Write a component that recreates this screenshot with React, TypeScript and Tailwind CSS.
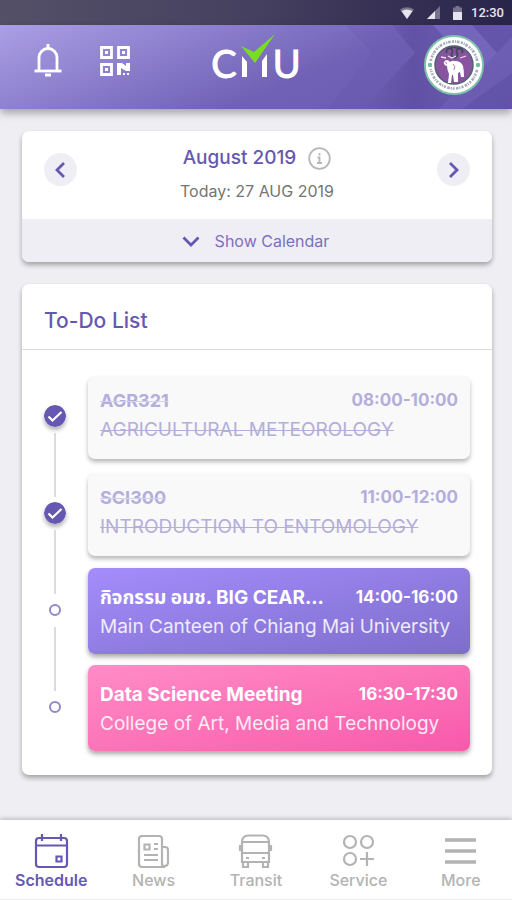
import type { ReactNode } from "react";

const SANS = "font-['Inter','Noto_Sans_Thai','Noto_Sans',sans-serif]";

type Task = {
  title: string;
  place: string;
  time: string;
  state: "done" | "violet" | "pink";
};

const tasks: Task[] = [
  { title: "AGR321", place: "AGRICULTURAL METEOROLOGY", time: "08:00-10:00", state: "done" },
  { title: "SCI300", place: "INTRODUCTION TO ENTOMOLOGY", time: "11:00-12:00", state: "done" },
  { title: "กิจกรรม อมช. BIG CEAR...", place: "Main Canteen of Chiang Mai University", time: "14:00-16:00", state: "violet" },
  { title: "Data Science Meeting", place: "College of Art, Media and Technology", time: "16:30-17:30", state: "pink" },
];

const cardStyle = {
  done: "h-[83px] mt-[2px] pt-[11px] bg-[#f9f9f9] text-[#b3aedb] shadow-[0_3px_4px_rgba(0,0,0,0.28)]",
  violet: "h-[86px] pt-4 bg-linear-to-br from-[#a48dfb] to-[#7d6dcb] text-white shadow-[0_3px_5px_rgba(0,0,0,0.35)]",
  pink: "h-[86px] pt-4 bg-linear-to-br from-[#ff8cc6] to-[#f858ab] text-white shadow-[0_3px_5px_rgba(0,0,0,0.35)]",
};

function StatusBar() {
  return (
    <div className="flex h-[25px] items-center justify-end bg-linear-to-r from-[#545068] via-[#45405f] to-[#29244a] pr-2 text-[#e6e4ef]">
      <svg className="mr-[13px] h-3 w-[14px]" viewBox="0 0 14 12" aria-hidden="true">
        <path d="M0 2.5Q7-2 14 2.5L7 12Z" fill="#77738c" />
        <path d="M1.5 4Q7 1 12.500 4L7 12Z" fill="currentColor" />
      </svg>
      <svg className="mr-[13px] h-[13px] w-[13px]" viewBox="0 0 13 13" aria-hidden="true">
        <path d="M13 0V13H0Z" fill="#77738c" />
        <path d="M8 5V13H0Z" fill="currentColor" />
      </svg>
      <svg className="mr-[9px] h-[14px] w-[9px]" viewBox="0 0 9 14" aria-hidden="true">
        <path d="M2.500 0H6.500V1.500H9V14H0V1.500H2.500Z" fill="#77738c" />
        <path d="M0 6H9V14H0Z" fill="currentColor" />
      </svg>
      <span className="font-['Roboto',sans-serif] text-[13px] leading-4 font-medium">12:30</span>
    </div>
  );
}

function Seal() {
  return (
    <svg className="h-[60px] w-[60px]" viewBox="0 0 60 60" aria-hidden="true">
      <circle cx="30" cy="30" r="29" fill="#fff" stroke="#7fc4a8" strokeWidth="2" />
      <circle cx="30" cy="30" r="23.500" fill="none" stroke="#a9abb8" strokeWidth="2.600" strokeDasharray="2 1 1.200 .8 2.600 1.400" />
      <path d="M2.500 26h7v8h-7zM50.500 26h7v8h-7z" fill="#fff" />
      <circle cx="6" cy="30" r="2.200" fill="#6dbd9c" />
      <circle cx="54" cy="30" r="2.200" fill="#6dbd9c" />
      <circle cx="30" cy="30" r="19" fill="#88539f" stroke="#506074" strokeWidth="1.500" />
      <path d="M23 18a3 3 0 1 1 5 0a3 3 0 1 0 5 0a3 3 0 1 1 5 0M24 14q6-3 12 0" fill="none" stroke="#3f4658" strokeWidth="1.600" />
      <path d="M17 22l5 1M24 21l4 2 4-2M36 23l6-2" fill="none" stroke="#e9e2ef" strokeWidth="1.300" />
      <path d="M22 25q3 0 4 2 2-2 5-1 6 0 8 5 1 4 1 11h-3l-1-5-2 1v9h-4l-1-7h-1l-1 8h-3l1-9q-2-5-2-8-2 0-3-2-1-2 2-4z" fill="#fff" />
      <path d="M29 29q3 2 1 6M22 27q-1 1 1 2" fill="none" stroke="#a77ab8" strokeWidth="1" />
    </svg>
  );
}

function Header() {
  return (
    <header className="relative flex h-[84px] items-start bg-linear-[158deg] from-[#ab9fe5] via-[#7061b6] via-60% to-[#6a5bb0] pt-[10px] text-white shadow-[0_4px_8px_rgba(0,0,0,0.32)]">
      <svg className="absolute inset-y-0 right-0 h-[84px] w-[200px]" viewBox="0 0 200 84" aria-hidden="true">
        <defs>
          <linearGradient id="fold" gradientUnits="userSpaceOnUse" x1="50" y1="0" x2="165" y2="0">
            <stop offset="0" stopColor="#51428f" stopOpacity=".1" />
            <stop offset=".45" stopColor="#4c3e8c" stopOpacity=".42" />
            <stop offset="1" stopColor="#5a4ba0" stopOpacity=".15" />
          </linearGradient>
        </defs>
        <path d="M34 0l26 28L15 84h35l53-56L80 0Z" fill="#5d4ea3" opacity=".12" />
        <path d="M80 0H121L165 45L127 84H50L103 28Z" fill="url(#fold)" />
        <path d="M121 0H160L185 28L151 62L145 28Z" fill="#7b6bc3" opacity=".5" />
        <path d="M160 0H200V12L185 28ZM200 48V84H150Z" fill="#54459a" opacity=".35" />
      </svg>
      <div className="relative grid w-full grid-cols-[1fr_auto_1fr] items-start">
        <div className="flex gap-[38px] pl-[34px] pt-[9px]">
          <button aria-label="Notifications">
            <svg className="h-[34px] w-[28px]" viewBox="0 0 28 34" fill="none" stroke="currentColor" strokeWidth="2.800" aria-hidden="true">
              <path d="M5 27V13.500a9 9 0 0 1 18 0V27" />
              <path d="M.5 27H27.500" />
              <path d="M14 0v5M11 31h6" strokeWidth="3" />
            </svg>
          </button>
          <button aria-label="QR code">
            <svg className="h-[30px] w-[30px]" viewBox="0 0 30 30" fill="none" stroke="currentColor" strokeWidth="2.800" aria-hidden="true">
              <path d="M1.500 1.500h10v10h-10zM18.500 1.500h10v10h-10zM1.500 18.500h10v10h-10z" />
              <path d="M5 5h3v3H5zM22 5h3v3h-3zM5 22h3v3H5z" fill="currentColor" stroke="none" />
              <path d="M17 17h5l4 3V17h4v8h-4l-5-3v7h-4zM23 27h2v2h-2zM27 27h2v2h-2z" fill="currentColor" stroke="none" />
            </svg>
          </button>
        </div>
        <div className="flex pt-[2px] font-['Lato',sans-serif] text-[38px] leading-[52px] [-webkit-text-stroke:1px_white]" role="img" aria-label="CMU">
          <span>C</span>
          <svg className="h-[52px] w-[36px] overflow-visible" viewBox="0 0 36 52" aria-hidden="true">
            <path d="M5 19l5 6V40H5zM25 24l5-7V40h-5z" fill="#fff" />
            <path d="M4 9l13 6L38-3 18 26Z" fill="#79dc22" />
          </svg>
          <span>U</span>
        </div>
        <button className="mr-[28px] justify-self-end" aria-label="Profile">
          <Seal />
        </button>
      </div>
    </header>
  );
}

function Chevron({ d }: { d: string }) {
  return (
    <svg className="h-5 w-5" viewBox="0 0 20 20" fill="none" stroke="#6658b2" strokeWidth="2.800" aria-hidden="true">
      <path d={d} />
    </svg>
  );
}

function CalendarCard() {
  return (
    <section className="overflow-hidden rounded-[7px] bg-white shadow-[0_3px_5px_rgba(0,0,0,0.32)]">
      <div className="flex h-[88px] items-start justify-between px-[22px]">
        <button className="mt-[22px] flex size-[33px] items-center justify-center rounded-full bg-[#efeef4]" aria-label="Previous month">
          <Chevron d="M13 3L6 10l7 7" />
        </button>
        <div className="flex flex-col items-center pt-[14px]">
          <div className="flex items-center gap-3">
            <h2 className="text-[19px] leading-[26px] font-medium text-[#6658b2]">August 2019</h2>
            <button aria-label="Month information">
              <svg className="h-[23px] w-[23px]" viewBox="0 0 23 23" fill="none" stroke="#b8b8b8" strokeWidth="1.800" aria-hidden="true">
                <circle cx="11.500" cy="11.500" r="10.300" />
                <path d="M11.500 6v2.500M9.500 10.500h2v5M9 16h5" />
              </svg>
            </button>
          </div>
          <p className="mt-2 text-base leading-6 text-[#757575]">Today: 27 AUG 2019</p>
        </div>
        <button className="mt-[22px] flex size-[33px] items-center justify-center rounded-full bg-[#efeef4]" aria-label="Next month">
          <Chevron d="M7 3l7 7-7 7" />
        </button>
      </div>
      <button className="flex h-[43px] w-full items-center justify-center gap-[14px] bg-[#efeef4] pr-1 text-base text-[#7c70c0]">
        <Chevron d="M2.500 6.500L10 14l7.500-7.500" />
        Show Calendar
      </button>
    </section>
  );
}

function Marker({ done }: { done: boolean }) {
  return done ? (
    <svg className="size-[22px] rounded-full shadow-[0_3px_4px_rgba(0,0,0,0.3)]" viewBox="0 0 22 22" role="img" aria-label="Completed">
      <circle cx="11" cy="11" r="11" fill="#6658b2" />
      <path d="M4.500 11.500l4 4 9-8.500" fill="none" stroke="#fff" strokeWidth="2.200" />
    </svg>
  ) : (
    <span className="my-[5px] size-3 rounded-full border-2 border-[#9187ca]" />
  );
}

function TaskRow({ task, last }: { task: Task; last: boolean }) {
  const done = task.state === "done";
  return (
    <li className="flex h-[97px] last:h-[86px]">
      <div className="flex w-[66px] shrink-0 flex-col items-center pt-[31px]">
        <Marker done={done} />
        {!last && <span className="mt-[6px] -mb-[26px] w-[2px] grow bg-[#dcdcdc]" />}
      </div>
      <div className={`min-w-0 grow rounded-[7px] px-3 ${cardStyle[task.state]}`}>
        <div className="flex justify-between leading-[28px] font-bold">
          <h3 className={`truncate ${done ? "text-[18px] line-through decoration-[#d3d0e8] decoration-1" : "text-[19px]"}`}>{task.title}</h3>
          <time className="shrink-0 text-[17px] leading-[26px]">{task.time}</time>
        </div>
        <p className={`text-[19px] leading-[30px] whitespace-nowrap ${done ? "line-through decoration-1" : "opacity-85"}`}>{task.place}</p>
      </div>
    </li>
  );
}

function TodoCard() {
  return (
    <section className="rounded-[7px] bg-white pb-6 shadow-[0_3px_5px_rgba(0,0,0,0.32)]">
      <h2 className="flex h-[66px] items-center border-b border-[#dadada] px-[22px] pt-2 text-[21px] font-medium text-[#6658b2]">To-Do List</h2>
      <ul className="pt-6 pr-[22px]">
        {tasks.map((task, i) => (
          <TaskRow key={task.title} task={task} last={i === tasks.length - 1} />
        ))}
      </ul>
    </section>
  );
}

const navItems: { label: string; icon: ReactNode }[] = [
  {
    label: "Schedule",
    icon: (
      <>
        <rect x="2" y="4" width="31" height="29" rx="3" />
        <path d="M2 11.500H33M8 0v7M27 0v7" />
        <path d="M22.500 22.500h5v5h-5z" />
      </>
    ),
  },
  {
    label: "News",
    icon: (
      <>
        <path d="M27 13h2a3 3 0 0 1 3 3v13a3.500 3.500 0 0 1-6 2V5a3 3 0 0 0-3-3H6a3 3 0 0 0-3 3v25a3 3 0 0 0 3 3h23" />
        <path d="M8.500 10.500h5v5h-5zM18 10h4M18 15h4M8 21h14M8 26h14" />
      </>
    ),
  },
  {
    label: "Transit",
    icon: (
      <>
        <path d="M4 28V8q0-6 6-6.500h15Q31 2 31 8v20zM4 8h27M4 19h27M4 12H2v5M31 12h2v5" />
        <path d="M5 28v5h5v-5M25 28v5h5v-5M8 24h3M24 24h3" />
      </>
    ),
  },
  {
    label: "Service",
    icon: (
      <>
        <circle cx="9" cy="8" r="6" />
        <circle cx="26" cy="8" r="6" />
        <circle cx="9" cy="25" r="6" />
        <path d="M26 18v14M19 25h14" />
      </>
    ),
  },
  { label: "More", icon: <path d="M2 6h31M2 17h31M2 28h31" strokeWidth="3.500" /> },
];

function BottomNav() {
  return (
    <nav className="relative grid h-[80px] grid-cols-5 border-b border-[#eeeeee] bg-white shadow-[0_-2px_4px_rgba(0,0,0,0.18)]">
      {navItems.map((item, i) => (
        <a
          key={item.label}
          href={`#${item.label.toLowerCase()}`}
          className={`flex flex-col items-center pt-[14px] text-base leading-[22px] ${i === 0 ? "font-semibold text-[#6658b2]" : "font-medium text-[#b3b3b3]"}`}
        >
          <svg className="h-[35px] w-[35px]" viewBox="0 0 35 35" fill="none" stroke="currentColor" strokeWidth="2.200" aria-hidden="true">
            {item.icon}
          </svg>
          {item.label}
        </a>
      ))}
    </nav>
  );
}

export default function App() {
  return (
    <div className={`flex min-h-screen flex-col bg-[#efeef3] ${SANS}`}>
      <StatusBar />
      <Header />
      <main className="flex grow flex-col gap-[22px] py-[22px] pr-5 pl-[22px]">
        <CalendarCard />
        <TodoCard />
      </main>
      <BottomNav />
    </div>
  );
}
